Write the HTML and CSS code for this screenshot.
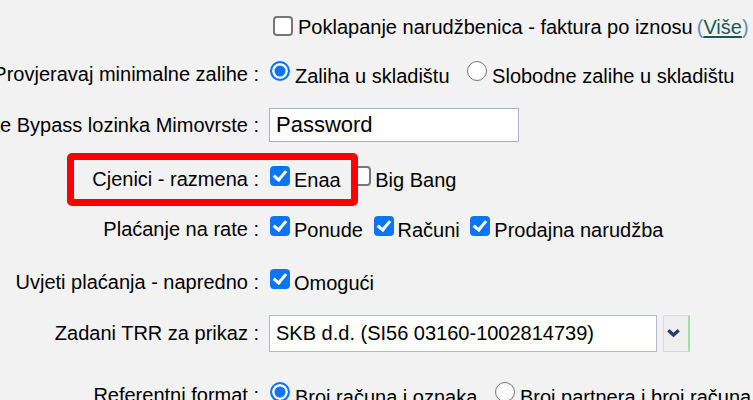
FILE: index.html
```html
<!DOCTYPE html>
<html lang="hr">
<head>
<meta charset="utf-8">
<title>Postavke</title>
<link rel="stylesheet" href="styles.css">
</head>
<body>
<div class="form">
  <div class="row r1">
    <div class="lbl"></div>
    <div class="val">
      <label class="opt first"><input type="checkbox" class="chk chk-mid">Poklapanje narudžbenica - faktura po iznosu</label><a class="more" href="#"><span class="paren">(</span><span class="more-txt">Više</span><span class="paren">)</span></a>
    </div>
  </div>

  <div class="row r2">
    <div class="lbl">Provjeravaj minimalne zalihe :</div>
    <div class="val">
      <label class="opt wide"><input type="radio" name="zal" class="rad" checked>Zaliha u skladištu</label>
      <label class="opt"><input type="radio" name="zal" class="rad">Slobodne zalihe u skladištu</label>
    </div>
  </div>

  <div class="row r3">
    <div class="lbl">Koristite Bypass lozinka Mimovrste :</div>
    <div class="val">
      <input type="text" class="txt" value="Password">
    </div>
  </div>

  <div class="row r4">
    <div class="lbl">Cjenici - razmena :</div>
    <div class="val">
      <label class="opt"><input type="checkbox" class="chk" checked>Enaa</label>
      <label class="opt"><input type="checkbox" class="chk">Big Bang</label>
    </div>
    <div class="hl"></div>
  </div>

  <div class="row r5">
    <div class="lbl">Plaćanje na rate :</div>
    <div class="val">
      <label class="opt"><input type="checkbox" class="chk" checked>Ponude</label>
      <label class="opt"><input type="checkbox" class="chk" checked>Računi</label>
      <label class="opt"><input type="checkbox" class="chk" checked>Prodajna narudžba</label>
    </div>
  </div>

  <div class="row r6">
    <div class="lbl">Uvjeti plaćanja - napredno :</div>
    <div class="val">
      <label class="opt"><input type="checkbox" class="chk" checked>Omogući</label>
    </div>
  </div>

  <div class="row r7">
    <div class="lbl">Zadani TRR za prikaz :</div>
    <div class="val sel-wrap">
      <select class="sel">
        <option>SKB d.d. (SI56 03160-1002814739)</option>
      </select>
      <span class="sel-btn"><svg width="13" height="8" viewBox="0 0 13 8"><polyline points="1.3,1.3 6.5,6 11.7,1.3" fill="none" stroke="#263f6d" stroke-width="3.4" stroke-linecap="butt" stroke-linejoin="miter"/></svg></span>
    </div>
  </div>

  <div class="row r8">
    <div class="lbl">Referentni format :</div>
    <div class="val">
      <label class="opt wide"><input type="radio" name="ref" class="rad" checked>Broj računa i oznaka</label>
      <label class="opt"><input type="radio" name="ref" class="rad">Broj partnera i broj računa</label>
    </div>
  </div>
</div>
</body>
</html>
```

FILE: styles.css
```css
html, body {
  margin: 0;
  padding: 0;
}

body {
  background: #f2f2f2;
  color: #000;
  font-family: "Liberation Sans", Arial, sans-serif;
  font-size: 20px;
  width: 753px;
  height: 400px;
  overflow: hidden;
}

.form {
  display: flex;
  flex-direction: column;
}

.row {
  display: flex;
  align-items: center;
  height: 40px;
  flex: none;
}

.r1 { margin-top: 7px; }
.r2 { margin-top: 7px; }
.r3 { margin-top: 11px; }
.r4 { margin-top: 14px; position: relative; }
.r5 { margin-top: 10px; }
.r6 { margin-top: 13px; }
.r7 { margin-top: 11px; }
.r8 { margin-top: 22px; }

.lbl {
  width: 259px;
  flex: none;
  display: flex;
  justify-content: flex-end;
  white-space: nowrap;
}

.val {
  margin-left: 9px;
  white-space: nowrap;
}

.opt {
  margin-right: 3px;
}

.opt.wide {
  margin-right: 10px;
}

.opt.first {
  margin-right: 0;
}

/* checkbox */
.chk {
  -webkit-appearance: none;
  appearance: none;
  box-sizing: border-box;
  position: relative;
  width: 20px;
  height: 20px;
  margin: 0 4px 1px 2px;
  vertical-align: baseline;
  border: 2px solid #767676;
  border-radius: 4px;
  background: #fff;
}

.chk:checked {
  border-color: #0b75f6;
  background: #0b75f6;
}

.chk:checked::after {
  content: "";
  position: absolute;
  left: 4px;
  top: 0px;
  width: 5px;
  height: 10px;
  border-right: 3px solid #fff;
  border-bottom: 3px solid #fff;
  transform: rotate(40deg);
  transform-origin: 50% 50%;
}

.chk-mid {
  margin: 0 5px 0 5px;
  vertical-align: -2px;
}

/* radio */
.rad {
  -webkit-appearance: none;
  appearance: none;
  box-sizing: border-box;
  width: 20px;
  height: 20px;
  margin: 0 5px 2px 2px;
  vertical-align: baseline;
  border: 1.5px solid #767676;
  border-radius: 50%;
  background: #fff;
}

.rad:checked {
  border: 2.5px solid #0b75f6;
  background: #0b75f6;
  box-shadow: inset 0 0 0 2.5px #fff;
}

.more {
  margin-left: 4px;
  text-decoration: none;
}

.paren {
  color: #6a8fa8;
}

.more-txt {
  color: #1f5a50;
  text-decoration: underline;
  text-decoration-color: #17594a;
  text-decoration-thickness: 2px;
  text-underline-offset: 2px;
}

.txt {
  box-sizing: border-box;
  width: 250px;
  height: 34px;
  margin: 0 0 0 1px;
  padding: 0 6px;
  border: 1px solid #aab0c6;
  background: #fff;
  font-family: "Liberation Sans", Arial, sans-serif;
  font-size: 22px;
  color: #000;
  outline: none;
}

.hl {
  position: absolute;
  left: 67px;
  top: -6px;
  width: 291px;
  height: 53px;
  box-sizing: border-box;
  border: 7px solid #ff0000;
  border-radius: 5px;
  pointer-events: none;
}

.sel-wrap {
  display: flex;
  align-items: stretch;
  gap: 6px;
  margin-left: 10px;
}

.sel {
  box-sizing: border-box;
  width: 388px;
  height: 37px;
  margin: 0;
  padding: 0 6px;
  border: 1px solid #b4b8cc;
  border-radius: 0;
  background: #fff;
  font-family: "Liberation Sans", Arial, sans-serif;
  font-size: 20px;
  color: #000;
  appearance: none;
  -webkit-appearance: none;
  outline: none;
}

.sel-btn {
  box-sizing: border-box;
  width: 27px;
  height: 37px;
  display: flex;
  align-items: center;
  justify-content: center;
  padding-right: 5px;
  background: #efefef;
  border-top: 1px solid #dcdcdc;
  border-left: 1px solid #dcdcdc;
  border-bottom: 1px solid #d6d6d6;
  border-right: 2px solid #a6dca6;
}
```
